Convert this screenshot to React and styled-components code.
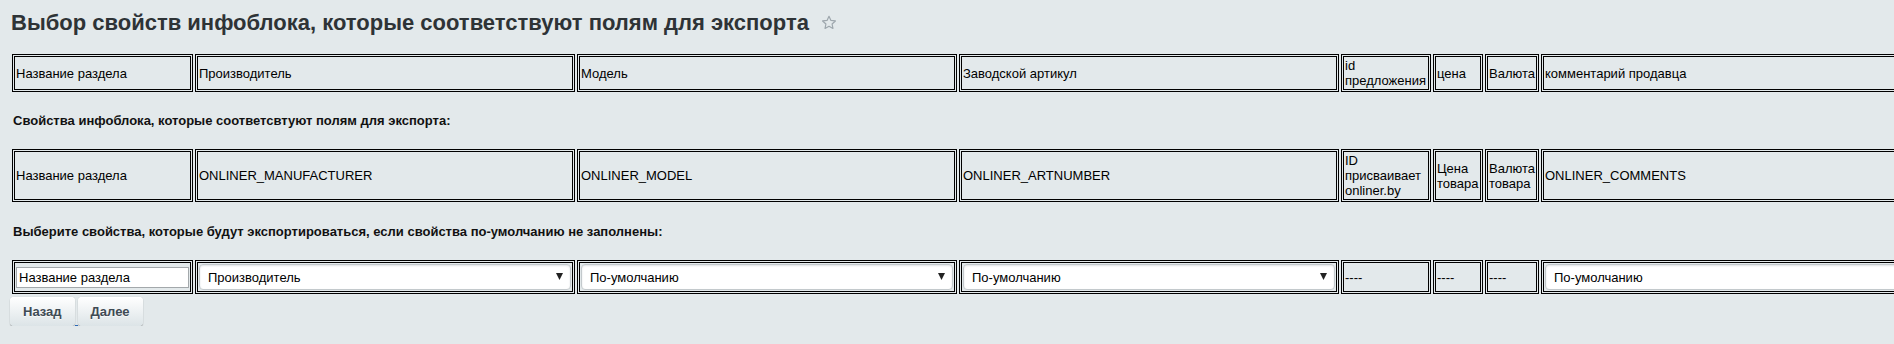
import React from 'react';
import styled, { createGlobalStyle } from 'styled-components';

const GlobalStyle = createGlobalStyle`
  html, body {
    margin: 0;
    padding: 0;
    background: #e3e9eb;
    overflow: hidden;
  }
  body {
    font-family: "Liberation Sans", Arial, sans-serif;
    color: #000;
  }
`;

const Page = styled.div`
  padding-left: 10px;
  width: calc(100vw - 10px);
  overflow: hidden;
`;

const Header = styled.div`
  display: flex;
  align-items: center;
  gap: 12px;
  height: 46px;
  padding-left: 1px;
`;

const Title = styled.h1`
  margin: 0;
  font-family: "Liberation Sans", Arial, sans-serif;
  font-size: 22px;
  font-weight: bold;
  line-height: 26px;
  color: #2e3336;
  white-space: nowrap;
`;

const Grid = styled.table`
  border-collapse: separate;
  border-spacing: 2px;
  margin-top: ${(p) => p.$top || 0}px;
`;

const Cell = styled.td`
  box-sizing: border-box;
  width: ${(p) => p.$w}px;
  min-width: ${(p) => p.$w}px;
  max-width: ${(p) => p.$w}px;
  border: 3px double #000;
  padding: 1px;
  font-family: "Liberation Sans", Arial, sans-serif;
  font-size: 13px;
  line-height: 15px;
  color: #000;
  vertical-align: middle;
  text-align: left;
`;

const Label = styled.div`
  margin: ${(p) => p.$top}px 0 19px 3px;
  font-size: 13px;
  line-height: 15px;
  font-weight: bold;
  color: #111;
  white-space: nowrap;
`;

const TextInput = styled.input`
  box-sizing: border-box;
  display: block;
  width: 100%;
  height: 21px;
  margin: 0;
  padding: 0 2px;
  border: 1px solid #a3a8ab;
  background: #fff;
  font-family: "Liberation Sans", Arial, sans-serif;
  font-size: 13px;
  color: #000;
  outline: none;
`;

const SelectWrap = styled.div`
  position: relative;
  height: 26px;
`;

const Select = styled.select`
  box-sizing: border-box;
  width: 100%;
  height: 26px;
  margin: 0;
  padding: 0 20px 0 8px;
  border: 1px solid #c3c9cc;
  border-radius: 4px;
  background: #fff;
  box-shadow: inset 0 1px 2px rgba(160, 170, 175, 0.35);
  font-family: "Liberation Sans", Arial, sans-serif;
  font-size: 13px;
  color: #000;
  appearance: none;
  -webkit-appearance: none;
  outline: none;
`;

const Arrow = styled.svg`
  position: absolute;
  right: 8px;
  top: 9px;
  pointer-events: none;
`;

const Buttons = styled.div`
  display: flex;
  align-items: flex-end;
  margin-top: 1px;
`;

const Button = styled.button`
  height: 29px;
  padding: 0 13px;
  border: none;
  border-radius: 4px;
  background: linear-gradient(to bottom, #ffffff, #dce4e7);
  box-shadow: 0 0 1px rgba(0, 0, 0, 0.2), 0 1px 1px rgba(0, 0, 0, 0.3),
    inset 0 1px #fff;
  font-family: "Liberation Sans", Arial, sans-serif;
  font-size: 13px;
  font-weight: bold;
  color: #3f4b54;
  text-shadow: 0 1px rgba(255, 255, 255, 0.7);
  cursor: pointer;
`;

const LinkGap = styled.span`
  width: 3px;
  height: 11px;
  border-bottom: 1px solid #2a67b4;
`;

const widths = [181, 380, 380, 380, 90, 50, 54, 520];

const fieldNames = [
  'Название раздела',
  'Производитель',
  'Модель',
  'Заводской артикул',
  'id предложения',
  'цена',
  'Валюта',
  'комментарий продавца',
];

const exportNames = [
  'Название раздела',
  'ONLINER_MANUFACTURER',
  'ONLINER_MODEL',
  'ONLINER_ARTNUMBER',
  'ID присваивает onliner.by',
  'Цена товара',
  'Валюта товара',
  'ONLINER_COMMENTS',
];

const fallback = [
  { type: 'input', value: 'Название раздела' },
  { type: 'select', value: 'Производитель' },
  { type: 'select', value: 'По-умолчанию' },
  { type: 'select', value: 'По-умолчанию' },
  { type: 'text', value: '----' },
  { type: 'text', value: '----' },
  { type: 'text', value: '----' },
  { type: 'select', value: 'По-умолчанию' },
];

const StarIcon = () => (
  <svg width="16" height="16" viewBox="0 0 16 16">
    <path
      d="M8 1.3l1.95 4.1 4.45.55-3.3 3.05.85 4.45L8 11.25l-3.95 2.2.85-4.45-3.3-3.05 4.45-.55z"
      fill="none"
      stroke="#9ea7ad"
      strokeWidth="1.2"
      strokeLinejoin="round"
    />
  </svg>
);

const Dropdown = ({ value }) => (
  <SelectWrap>
    <Select defaultValue={value}>
      <option>{value}</option>
    </Select>
    <Arrow width="7" height="7" viewBox="0 0 7 7">
      <path d="M0 0h7L3.5 7z" fill="#222" />
    </Arrow>
  </SelectWrap>
);

const App = () => {
  return (
    <Page>
      <GlobalStyle />
      <Header>
        <Title>Выбор свойств инфоблока, которые соответствуют полям для экспорта</Title>
        <StarIcon />
      </Header>

      <Grid $top={6}>
        <tbody>
          <tr>
            {fieldNames.map((name, i) => (
              <Cell key={i} $w={widths[i]}>{name}</Cell>
            ))}
          </tr>
        </tbody>
      </Grid>

      <Label $top={19}>Свойства инфоблока, которые соответсвтуют полям для экспорта:</Label>

      <Grid>
        <tbody>
          <tr>
            {exportNames.map((name, i) => (
              <Cell key={i} $w={widths[i]}>{name}</Cell>
            ))}
          </tr>
        </tbody>
      </Grid>

      <Label $top={20}>Выберите свойства, которые будут экспортироваться, если свойства по-умолчанию не заполнены:</Label>

      <Grid>
        <tbody>
          <tr>
            {fallback.map((item, i) => (
              <Cell key={i} $w={widths[i]}>
                {item.type === 'input' && <TextInput defaultValue={item.value} />}
                {item.type === 'select' && <Dropdown value={item.value} />}
                {item.type === 'text' && item.value}
              </Cell>
            ))}
          </tr>
        </tbody>
      </Grid>

      <Buttons>
        <Button type="button">Назад</Button>
        <LinkGap />
        <Button type="button">Далее</Button>
      </Buttons>
    </Page>
  );
};

export default App;
